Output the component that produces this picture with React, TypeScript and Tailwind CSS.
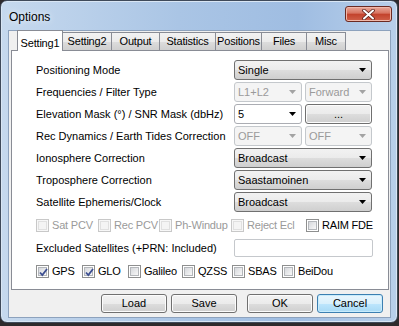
import clsx from 'clsx'

const font = "font-['Liberation_Sans',Arial,sans-serif]"

function Arrow({ disabled }: { disabled?: boolean }) {
  return (
    <svg width="7" height="4" viewBox="0 0 7 4" className="shrink-0">
      <polygon points="0,0 7,0 3.5,4" fill={disabled ? '#a3a3a3' : '#000'} />
    </svg>
  )
}

function Combo({ value, disabled, edit, w = 'w-[138px]' }: { value: string; disabled?: boolean; edit?: boolean; w?: string }) {
  return (
    <div
      className={clsx(
        'flex h-[20px] items-center justify-between rounded-[3px] border pl-[3px] pr-[5px]',
        w,
        disabled
          ? 'border-[#c4c8cc] bg-[#f4f4f4] text-[#9a9a9a]'
          : edit
            ? 'border-[#abadb3] bg-white'
            : 'border-[#707070] bg-[linear-gradient(#f2f2f2,#ebebeb_50%,#dddddd_50%,#cfcfcf)]',
      )}
    >
      <span>{value}</span>
      <Arrow disabled={disabled} />
    </div>
  )
}

function Check({ label, checked, disabled, w }: { label: string; checked?: boolean; disabled?: boolean; w?: string }) {
  return (
    <div className={clsx('flex items-center', w)}>
      <span
        className={clsx(
          'flex h-[13px] w-[13px] shrink-0 items-center justify-center border',
          disabled ? 'border-[#c8c8c8] bg-[#f7f7f7]' : 'border-[#8e8f8f] bg-white',
        )}
      >
        <span
          className={clsx(
            'relative flex h-[9px] w-[9px] items-center justify-center border',
            disabled ? 'border-[#e0e0e0] bg-[#f4f4f4]' : 'border-[#b4b7bb] bg-[linear-gradient(135deg,#d6d8dc,#f8f8f8)]',
          )}
        >
          {checked && (
            <svg width="11" height="11" viewBox="0 0 11 11" className="absolute -left-[1px] -top-[1px]">
              <path d="M2 5.5 L4.3 8 L9 2" fill="none" stroke="#3d4f91" strokeWidth="1.8" />
            </svg>
          )}
        </span>
      </span>
      <span className={clsx('ml-[3px] tracking-[-0.2px]', disabled && 'text-[#9a9a9a]')}>{label}</span>
    </div>
  )
}

function Row({ label, children, className }: { label: string; children: React.ReactNode; className?: string }) {
  return (
    <div className={clsx('flex h-[20px] items-center', className)}>
      <span className="w-[198px]">{label}</span>
      {children}
    </div>
  )
}

function Button({ label, focused }: { label: string; focused?: boolean }) {
  return (
    <div
      className={clsx(
        'flex h-[19px] w-[66px] items-center justify-center rounded-[3px] border',
        focused
          ? 'border-[#3c7fb1] bg-[linear-gradient(#eaf6fd,#d9f0fc_50%,#bee6fd_50%,#a7d9f5)] shadow-[inset_0_0_0_1px_#c8ecfc]'
          : 'border-[#707070] bg-[linear-gradient(#f2f2f2,#ebebeb_50%,#dddddd_50%,#cfcfcf)] shadow-[inset_0_0_0_1px_#fcfcfc]',
      )}
    >
      {label}
    </div>
  )
}

const tabs = [
  { label: 'Setting1', w: 'w-[46px]' },
  { label: 'Setting2', w: 'w-[50px]' },
  { label: 'Output', w: 'w-[49px]' },
  { label: 'Statistics', w: 'w-[57px]' },
  { label: 'Positions', w: 'w-[47px]' },
  { label: 'Files', w: 'w-[46px]' },
  { label: 'Misc', w: 'w-[40px]' },
]

export default function App() {
  return (
    <div className={clsx('h-[326px] w-[399px] whitespace-nowrap bg-[#2e2a2c] text-[11px] text-black', font)}>
      <div className="h-[323px] w-[398px] rounded-[7px] border border-[#3f4a5a] bg-[linear-gradient(90deg,#c6d9ee,#aac5e5_45%,#9fbde2_75%,#b8cfea)] shadow-[inset_0_0_0_1px_#d9e6f4]">
        <div className="flex h-[29px] items-start justify-between">
          <span className="pl-[8px] pt-[9px] text-[12px] leading-[14px] [text-shadow:0_0_6px_#ffffff]">Options</span>
          <div className="mr-[5px] mt-[5px] flex h-[16px] w-[47px] items-center justify-center rounded-[3px] border border-[#6b2a22] bg-[linear-gradient(#e9a99a,#d7725f_45%,#c2412b_50%,#d0614a)] shadow-[inset_0_0_0_1px_#f0b8aa]">
            <svg width="13" height="11" viewBox="0 0 13 11">
              <path d="M2 1.5 L11 9.5 M11 1.5 L2 9.5" stroke="#5a1f18" strokeWidth="3.6" strokeLinecap="round" />
              <path d="M2 1.5 L11 9.5 M11 1.5 L2 9.5" stroke="#ffffff" strokeWidth="2" strokeLinecap="round" />
            </svg>
          </div>
        </div>
        <div className="ml-[7px] h-[288px] w-[383px] border border-[#8da2bd] bg-[#f0f0f0]">
          <div className="flex h-[19px] items-end pl-[8px] tracking-[-0.2px]">
            {tabs.map((t, i) =>
              i === 0 ? (
                <div
                  key={t.label}
                  className={clsx('relative z-10 -mb-[1px] flex h-[21px] items-start justify-center border border-b-0 border-[#898c95] bg-white pt-[4px]', t.w)}
                >
                  {t.label}
                </div>
              ) : (
                <div
                  key={t.label}
                  className={clsx('-ml-[1px] flex h-[18px] items-center justify-center border border-b-0 border-[#898c95] bg-[linear-gradient(#f2f2f2,#ebebeb_50%,#dddddd_50%,#cfcfcf)]', t.w)}
                >
                  {t.label}
                </div>
              ),
            )}
          </div>
          <div className="ml-[2px] h-[240px] w-[378px] border border-[#898c95] bg-white pl-[24px] pt-[9px]">
            <div className="flex flex-col gap-[2px]">
              <Row label="Positioning Mode">
                <Combo value="Single" />
              </Row>
              <Row label="Frequencies / Filter Type">
                <div className="flex gap-[3px]">
                  <Combo value="L1+L2" disabled w="w-[68px]" />
                  <Combo value="Forward" disabled w="w-[67px]" />
                </div>
              </Row>
              <Row label="Elevation Mask (°) / SNR Mask (dbHz)">
                <div className="flex gap-[3px]">
                  <Combo value="5" edit w="w-[68px]" />
                  <div className="flex h-[20px] w-[67px] items-center justify-center rounded-[3px] border border-[#707070] bg-[linear-gradient(#f2f2f2,#ebebeb_50%,#dddddd_50%,#cfcfcf)] shadow-[inset_0_0_0_1px_#fcfcfc]">
                    ...
                  </div>
                </div>
              </Row>
              <Row label="Rec Dynamics / Earth Tides Correction">
                <div className="flex gap-[3px]">
                  <Combo value="OFF" disabled w="w-[68px]" />
                  <Combo value="OFF" disabled w="w-[67px]" />
                </div>
              </Row>
              <Row label="Ionosphere Correction">
                <Combo value="Broadcast" />
              </Row>
              <Row label="Troposphere Correction">
                <Combo value="Saastamoinen" />
              </Row>
              <Row label="Satellite Ephemeris/Clock">
                <Combo value="Broadcast" />
              </Row>
            </div>
            <div className="mt-[3px] flex h-[20px] items-center">
              <Check label="Sat PCV" disabled w="w-[62px]" />
              <Check label="Rec PCV" disabled w="w-[61px]" />
              <Check label="Ph-Windup" disabled w="w-[72px]" />
              <Check label="Reject Ecl" disabled w="w-[75px]" />
              <Check label="RAIM FDE" />
            </div>
            <Row label="Excluded Satellites (+PRN: Included)" className="mt-[3px]">
              <div className="h-[18px] w-[139px] rounded-[2px] border border-[#c5c8cc] bg-white" />
            </Row>
            <div className="mt-[3px] flex h-[20px] items-center">
              <Check label="GPS" checked w="w-[46px]" />
              <Check label="GLO" checked w="w-[46px]" />
              <Check label="Galileo" w="w-[54px]" />
              <Check label="QZSS" w="w-[50px]" />
              <Check label="SBAS" w="w-[50px]" />
              <Check label="BeiDou" />
            </div>
          </div>
          <div className="mt-[4px] flex justify-end pr-[7px]">
            <Button label="Load" />
            <div className="ml-[4px]">
              <Button label="Save" />
            </div>
            <div className="ml-[10px]">
              <Button label="OK" />
            </div>
            <div className="ml-[4px]">
              <Button label="Cancel" focused />
            </div>
          </div>
        </div>
      </div>
    </div>
  )
}
